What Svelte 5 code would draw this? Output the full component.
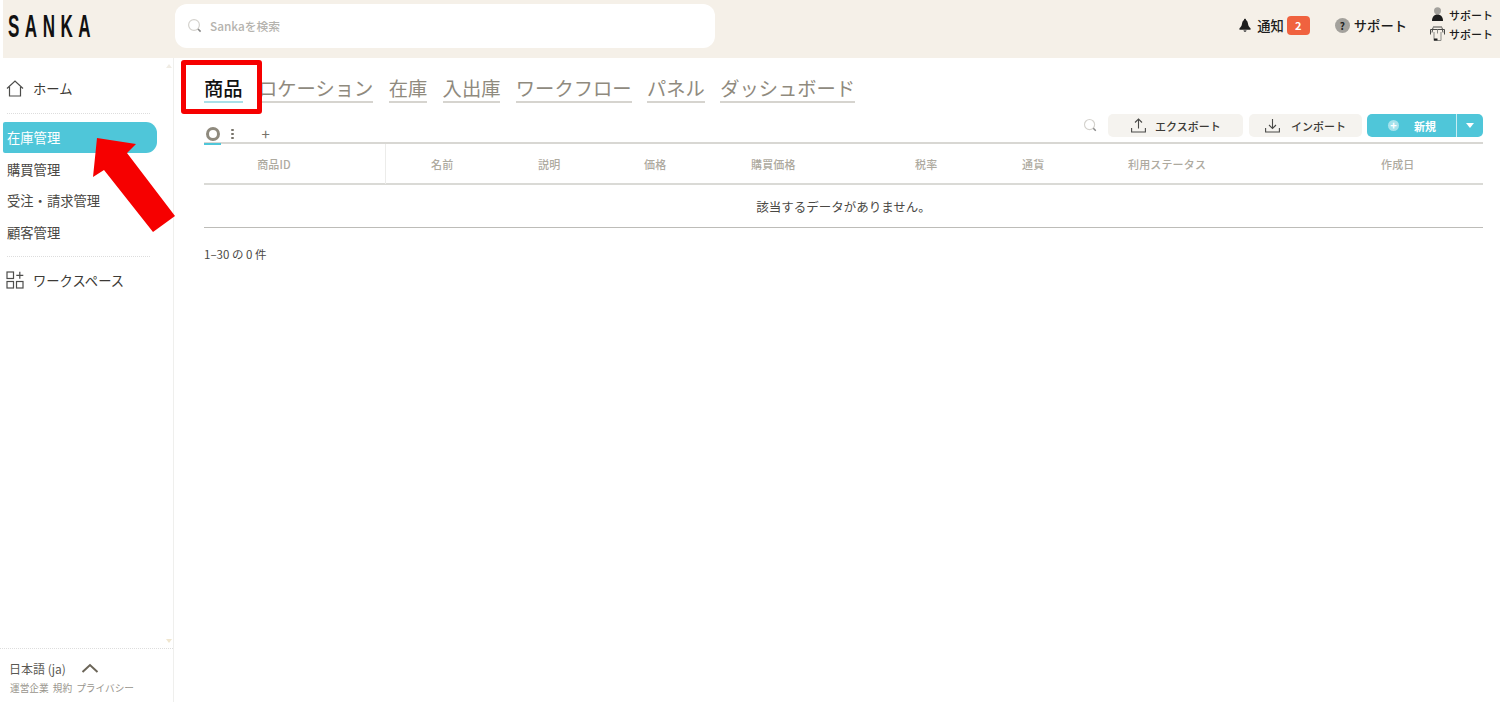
<script lang="ts">
  const tabs = ['ロケーション', '在庫', '入出庫', 'ワークフロー', 'パネル', 'ダッシュボード'];
  const columns = ['商品ID', '名前', '説明', '価格', '購買価格', '税率', '通貨', '利用ステータス', '作成日'];
  const navItems = ['在庫管理', '購買管理', '受注・請求管理', '顧客管理'];
</script>

<div class="shell">
  <header class="topbar">
    <div class="logo"><span>SANKA</span></div>
    <div class="search">
      <svg class="search-icon" width="16" height="16" viewBox="0 0 16 16" fill="none">
        <circle cx="7" cy="7" r="5.4" stroke="#d4d2cd" stroke-width="1.2" />
        <path d="M11 11l2.6 2.6" stroke="#888" stroke-width="1.6" />
      </svg>
      <span>Sankaを検索</span>
    </div>
    <div class="top-actions">
      <div class="notice">
        <svg width="12" height="15" viewBox="0 0 13 15">
          <path d="M6.500 0.300c.7 0 1.100.5 1.100 1.200C9 2.300 9.500 3.800 9.800 5.800c.3 1.900 1 3.300 2.700 4.700v1.500H.5v-1.500c1.700-1.400 2.400-2.800 2.700-4.700C3.500 3.800 4 2.300 5.400 1.500c0-.7.400-1.200 1.100-1.200z" fill="#1c1c1c" />
          <path d="M4.800 12.700h3.400C8 14 7.300 14.600 6.500 14.600S5 14 4.800 12.700z" fill="#555" />
        </svg>
        <span>通知</span>
        <b class="badge">2</b>
      </div>
      <div class="help">
        <span class="help-icon">?</span>
        <span>サポート</span>
      </div>
      <div class="mini-links">
        <div class="mini">
          <svg width="15" height="15" viewBox="0 0 15 15">
            <circle cx="7.500" cy="3.800" r="3.500" fill="#a3a19c" />
            <path d="M2 14c0-4 2-6.500 5.500-6.500S13 10 13 14z" fill="#1c1c1c" />
          </svg>
          <span>サポート</span>
        </div>
        <div class="mini">
          <svg width="15" height="16" viewBox="0 0 15 16" fill="none" stroke="#4a4a48" stroke-width="1">
            <path d="M0.500 3.500h14M3 1h9" />
            <path d="M3 1.500l-1 5M12 1.500l1 5M.5 3.500v5M14.500 3.500v5" />
            <path d="M4 6v8.500h7V6M7.500 3.500v4" stroke="#8a8a86" />
            <path d="M4 13.500h3.500" stroke="#1c1c1c" stroke-width="2" />
          </svg>
          <span>サポート</span>
        </div>
      </div>
    </div>
  </header>

  <div class="body">
    <aside class="sidebar">
      <div class="nav-scroll">
        <span class="scroll-up"></span>
        <div class="nav-link home">
          <svg width="18" height="17" viewBox="0 0 18 17" fill="none" stroke="#4d4d4b" stroke-width="1.200">
            <path d="M1 8.500L9 1l8 7.500M3.500 7v9h11V7" />
          </svg>
          <span>ホーム</span>
        </div>
        <div class="dots"></div>
        <nav class="nav-list">
          {#each navItems as item, i}
            <div class="nav-item" class:active={i === 0}>{item}</div>
          {/each}
        </nav>
        <div class="dots second"></div>
        <div class="nav-link">
          <svg width="18" height="18" viewBox="0 0 18 18" fill="none" stroke="#4d4d4b" stroke-width="1.200">
            <rect x="1" y="1" width="6.500" height="6.500" />
            <rect x="1" y="10.500" width="6.500" height="6.500" />
            <rect x="10.500" y="10.500" width="6.500" height="6.500" />
            <path d="M13.800 .8v7M10.300 4.300h7" />
          </svg>
          <span>ワークスペース</span>
        </div>
        <span class="scroll-down"></span>
      </div>
      <div class="side-foot">
        <div class="lang">
          <span>日本語 (ja)</span>
          <svg width="18" height="10" viewBox="0 0 18 10" fill="none" stroke="#6b6558" stroke-width="2">
            <path d="M1.500 9L9 2l7.500 7" />
          </svg>
        </div>
        <div class="foot-links">
          <span>運営企業</span><span>規約</span><span>プライバシー</span>
        </div>
      </div>
    </aside>

    <main class="main">
      <div class="tabs">
        <span class="tab current">商品</span>
        {#each tabs as tab}
          <span class="tab">{tab}</span>
        {/each}
      </div>

      <div class="toolbar">
        <div class="views">
          <span class="view-current"><i class="ring"></i></span>
          <span class="kebab"><i></i><i></i><i></i></span>
          <span class="plus">+</span>
        </div>
        <div class="actions">
          <svg class="tool-search" width="15" height="15" viewBox="0 0 16 16" fill="none">
            <circle cx="7" cy="7" r="5.400" stroke="#d4d2cd" stroke-width="1.200" />
            <path d="M11 11l2.600 2.600" stroke="#888" stroke-width="1.600" />
          </svg>
          <button class="btn export">
            <svg width="15" height="15" viewBox="0 0 15 15" fill="none" stroke="#4a4a48" stroke-width="1.100">
              <path d="M7.500 10.500V1M4 4.500L7.500 1 11 4.500M.6 10v4h13.800v-4" />
            </svg>
            <span>エクスポート</span>
          </button>
          <button class="btn import">
            <svg width="15" height="15" viewBox="0 0 15 15" fill="none" stroke="#4a4a48" stroke-width="1.100">
              <path d="M7.500 1v9.500M4 7l3.500 3.500L11 7M.6 10v4h13.800v-4" />
            </svg>
            <span>インポート</span>
          </button>
          <div class="new-btn">
            <div class="new-main">
              <span class="plus-circle">+</span>
              <span>新規</span>
            </div>
            <div class="new-caret"><i></i></div>
          </div>
        </div>
      </div>

      <div class="table">
        <div class="thead">
          {#each columns as col}
            <div class="th">{col}</div>
          {/each}
        </div>
        <div class="empty">該当するデータがありません。</div>
      </div>
      <p class="count">1–30 の 0 件</p>
    </main>
  </div>

  <div class="red-box"></div>
  <svg class="arrow" width="90" height="100" viewBox="90 135 90 100">
    <path d="M97 138L136 144 127 153 175 216 153 232 104 170 93 177z" fill="#f60000" />
  </svg>
</div>

<style>
  :global(body) {
    margin: 0;
    background: #fff;
  }

  .shell {
    position: relative;
    height: 702px;
    width: 1500px;
    display: flex;
    flex-direction: column;
    font-family: "Noto Sans CJK JP", "Noto Sans", sans-serif;
    color: #3c3a36;
    overflow: hidden;
  }

  .topbar {
    flex: 0 0 58px;
    margin-left: 3px;
    background: #f5f0e8;
    display: flex;
    align-items: flex-start;
  }

  .logo {
    width: 172px;
    height: 53px;
    padding-left: 5px;
    box-sizing: border-box;
    display: flex;
    align-items: center;
  }

  .logo span {
    font-family: "Liberation Sans", sans-serif;
    font-weight: 700;
    font-size: 31px;
    letter-spacing: 10px;
    color: #111;
    display: inline-block;
    transform: scaleX(0.55);
    transform-origin: left center;
    white-space: nowrap;
  }

  .search {
    width: 540px;
    height: 44px;
    margin-top: 4px;
    background: #fff;
    border-radius: 12px;
    display: flex;
    align-items: center;
    gap: 7px;
    padding: 0 0 1px 12px;
    box-sizing: border-box;
    font-size: 11.800px;
    font-weight: 500;
    color: #b5b3ae;
  }

  .top-actions {
    margin-left: auto;
    height: 50px;
    display: flex;
    align-items: center;
    padding-right: 7px;
    font-size: 13.300px;
    font-weight: 500;
    color: #1c1c1c;
  }

  .notice {
    display: flex;
    align-items: center;
    gap: 6px;
  }

  .badge {
    width: 23px;
    height: 19px;
    margin-left: -3px;
    border-radius: 4px;
    background: #f0623f;
    color: #fff;
    font-size: 11px;
    font-weight: 700;
    display: flex;
    align-items: center;
    justify-content: center;
  }

  .help {
    display: flex;
    align-items: center;
    gap: 4px;
    margin-left: 25px;
  }

  .help-icon {
    width: 15px;
    height: 15px;
    border-radius: 50%;
    background: #a3a19c;
    color: #222;
    font-size: 10px;
    font-weight: 700;
    display: flex;
    align-items: center;
    justify-content: center;
  }

  .mini-links {
    margin: -2px 0 0 23px;
    display: flex;
    flex-direction: column;
    gap: 3px;
    font-size: 11px;
  }

  .mini {
    display: flex;
    align-items: center;
    gap: 4px;
    height: 16px;
  }

  .body {
    flex: 1;
    display: flex;
    min-height: 0;
  }

  .sidebar {
    width: 174px;
    flex: none;
    border-right: 1px solid #efefed;
    box-sizing: border-box;
    display: flex;
    flex-direction: column;
  }

  .nav-scroll {
    position: relative;
    flex: 1;
    padding-top: 19px;
  }

  .scroll-up,
  .scroll-down {
    position: absolute;
    right: 1px;
    width: 0;
    height: 0;
    border-left: 3.500px solid transparent;
    border-right: 3.500px solid transparent;
  }

  .scroll-up {
    top: 6px;
    border-bottom: 4px solid #f0ece4;
  }

  .scroll-down {
    bottom: 5px;
    border-top: 4px solid #f0e6d0;
  }

  .nav-link {
    height: 22px;
    padding-left: 6px;
    display: flex;
    align-items: center;
    gap: 9px;
    font-size: 13.300px;
    color: #3c3a36;
  }

  .dots {
    margin: 14px 23px 0 7px;
    border-top: 1px dotted #ddd;
  }

  .dots.second {
    margin-top: 8px;
    margin-bottom: 12px;
  }

  .nav-list {
    margin-top: 8px;
    display: flex;
    flex-direction: column;
    gap: 0.700px;
  }

  .nav-item {
    height: 31px;
    line-height: 31px;
    margin-left: 3px;
    width: 154px;
    padding-left: 4px;
    box-sizing: border-box;
    font-size: 13.300px;
    color: #4a4844;
  }

  .nav-item.active {
    background: #4fc6d9;
    color: #fff;
    border-radius: 2px 11px 11px 2px;
  }

  .side-foot {
    height: 54px;
    flex: none;
    border-top: 1px dotted #ddd;
    padding: 10px 0 0 9px;
    box-sizing: border-box;
  }

  .lang {
    display: flex;
    align-items: center;
    gap: 15px;
    height: 18px;
    font-size: 12px;
    color: #5a5853;
  }

  .foot-links {
    display: flex;
    gap: 4px;
    margin-top: 4px;
    padding-left: 1px;
    font-size: 9.700px;
    line-height: 14px;
    color: #98958d;
    white-space: nowrap;
  }

  .main {
    flex: 1;
    min-width: 0;
    padding: 0 17px 0 30px;
  }

  .tabs {
    display: flex;
    gap: 15.400px;
    padding-top: 17px;
    height: 45px;
    box-sizing: border-box;
  }

  .tab {
    font-size: 19.300px;
    line-height: 26px;
    height: 26px;
    color: #8f8a7e;
    border-bottom: 2px solid #d6d4cf;
    white-space: nowrap;
  }

  .tab.current {
    color: #111;
    font-weight: 500;
    border-bottom-color: #a9dfe8;
  }

  .toolbar {
    height: 41px;
    display: flex;
    align-items: flex-start;
    justify-content: space-between;
    border-bottom: 2px solid #d8d7d3;
    box-sizing: border-box;
  }

  .views {
    display: flex;
    align-items: flex-end;
    height: 39px;
  }

  .view-current {
    width: 17px;
    height: 24px;
    margin-bottom: -3px;
    padding-top: 4px;
    border-bottom: 2px solid #4fc6d9;
    display: flex;
    justify-content: center;
    align-items: center;
    box-sizing: border-box;
  }

  .ring {
    width: 14px;
    height: 14px;
    border: 3px solid #8f8a7e;
    border-radius: 50%;
    box-sizing: border-box;
  }

  .kebab {
    display: flex;
    flex-direction: column;
    gap: 1.500px;
    margin: 0 0 3px 10px;
  }

  .kebab i {
    width: 2.500px;
    height: 2.500px;
    border-radius: 50%;
    background: #77736a;
  }

  .plus {
    margin: 0 0 1px 28px;
    font-size: 15px;
    line-height: 15px;
    color: #77736a;
  }

  .actions {
    display: flex;
    align-items: center;
    margin-top: 11px;
  }

  .tool-search {
    margin-right: 10px;
  }

  .btn {
    height: 23px;
    border: 0;
    border-radius: 5px;
    background: #f5f3ef;
    font: inherit;
    font-size: 11px;
    font-weight: 500;
    color: #3c3a36;
    display: flex;
    align-items: center;
    padding: 0;
  }

  .btn.export {
    width: 135px;
    padding-left: 23px;
    gap: 9px;
  }

  .btn.import {
    width: 113px;
    margin-left: 6px;
    padding-left: 16px;
    gap: 11px;
  }

  .new-btn {
    width: 116px;
    height: 23px;
    margin-left: 5px;
    display: flex;
    border-radius: 5px;
    overflow: hidden;
    background: #4fc6d9;
    color: #fff;
    font-size: 11px;
    font-weight: 700;
  }

  .new-main {
    width: 90px;
    display: flex;
    align-items: center;
    padding-left: 21px;
    gap: 15px;
    box-sizing: border-box;
    border-right: 1px solid #c8edf3;
  }

  .plus-circle {
    width: 11px;
    height: 11px;
    border-radius: 50%;
    background: #a5e2ec;
    color: #fff;
    font-size: 11px;
    line-height: 10px;
    text-align: center;
  }

  .new-caret {
    flex: 1;
    display: flex;
    align-items: center;
    justify-content: center;
  }

  .new-caret i {
    border-left: 4.500px solid transparent;
    border-right: 4.500px solid transparent;
    border-top: 5px solid #fff;
  }

  .thead {
    display: grid;
    grid-template-columns: 182px 152px 106px 107px 164px 107px 106px 253px 1fr;
    height: 41px;
    border-bottom: 2px solid #dadad6;
    box-sizing: border-box;
  }

  .th {
    font-size: 11px;
    font-weight: 500;
    letter-spacing: 0.150px;
    line-height: 40px;
    color: #aeaa9f;
    white-space: nowrap;
  }

  .th:first-child {
    text-align: center;
    padding-right: 41px;
    border-right: 1px solid #ececea;
    box-sizing: border-box;
  }

  .th:nth-child(2) {
    padding-left: 45px;
  }

  .empty {
    height: 43px;
    line-height: 44px;
    text-align: center;
    font-size: 12.500px;
    color: #4a4844;
    border-bottom: 1px solid #bdbcb8;
    box-sizing: border-box;
  }

  .count {
    margin: 17px 0 0;
    font-size: 11.500px;
    line-height: 18px;
    color: #4a4844;
  }

  .red-box {
    position: absolute;
    left: 181px;
    top: 60px;
    width: 81px;
    height: 54px;
    border: 5px solid #f60000;
    border-radius: 3px;
    box-sizing: border-box;
  }

  .arrow {
    position: absolute;
    left: 90px;
    top: 135px;
  }
</style>
